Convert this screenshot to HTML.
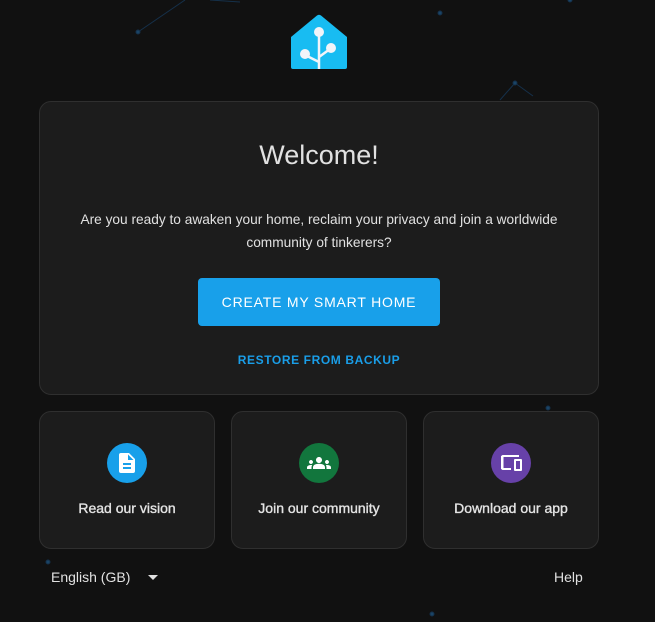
<!DOCTYPE html>
<html><head><style>
body{margin:0;width:655px;height:622px;background:#111111;font-family:"Liberation Sans",sans-serif;position:relative;overflow:hidden;color:#e1e1e1}
.card{position:absolute;background:#1c1c1c;border:1px solid #2f2f2f;border-radius:12px;box-sizing:border-box}
.t{position:absolute;width:100%;text-align:center}
.ic{position:absolute;left:50%;top:31px;width:40px;height:40px;margin-left:-20px;border-radius:50%}
.ic svg{position:absolute;left:8px;top:8px}
.lbl{top:88px;font-size:14px;color:#e4e4e4;-webkit-text-stroke:0.35px #e4e4e4}
</style></head><body>
<svg width="655" height="622" style="position:absolute;left:0;top:0">
<g stroke="#15304a" stroke-width="1" fill="#1a4466">
<line x1="138" y1="32" x2="185" y2="0"/><circle cx="138" cy="32" r="2"/>
<line x1="210" y1="0" x2="240" y2="2"/>
<circle cx="440" cy="13" r="2"/><circle cx="570" cy="0" r="2"/>
<line x1="500" y1="100" x2="515" y2="83"/><line x1="515" y1="83" x2="533" y2="96"/><circle cx="515" cy="83" r="2"/>
<circle cx="548" cy="408" r="2"/><circle cx="48" cy="562" r="2"/><circle cx="432" cy="614" r="2"/>
</g></svg>
<svg width="58" height="56" viewBox="0 0 58 56" style="position:absolute;left:290px;top:14px">
<path d="M1 23 L27 1.5 Q29 0 31 1.5 L57 23 V53 Q57 55 55 55 H3 Q1 55 1 53 Z" fill="#18bcf2"/>
<g stroke="#f2f4f9" stroke-width="2.5" fill="none"><path d="M29 18 V55 M29 48 L15 41 M29 43 L40 35"/></g>
<g fill="#f2f4f9"><circle cx="29" cy="18" r="5"/><circle cx="15" cy="40" r="5"/><circle cx="41" cy="34" r="5"/></g>
</svg>
<div class="card" style="left:39px;top:101px;width:560px;height:294px">
<div class="t" style="top:38px;font-size:27px;color:#e1e1e1">Welcome!</div>
<div class="t" style="top:106px;font-size:13.7px;line-height:23px;color:#e1e1e1">Are you ready to awaken your home, reclaim your privacy and join a worldwide<br>community of tinkerers?</div>
<div style="position:absolute;left:158px;top:176px;width:242px;height:48px;background:#18a0ea;border-radius:4px;color:#fff;font-size:14px;letter-spacing:0.8px;text-align:center;line-height:48px">CREATE MY SMART HOME</div>
<div class="t" style="top:251px;font-size:12px;letter-spacing:0.6px;color:#1a9ee8;font-weight:bold">RESTORE FROM BACKUP</div>
</div>
<div class="card" style="left:39px;top:411px;width:176px;height:138px">
<div class="ic" style="background:#18a0ea"><svg width="24" height="24" viewBox="0 0 24 24"><path fill="#fff" d="M14 2H6a2 2 0 0 0-2 2v16a2 2 0 0 0 2 2h12a2 2 0 0 0 2-2V8l-6-6zM16 18H8v-2h8v2zm0-4H8v-2h8v2zm-3-5V3.5L18.5 9H13z"/></svg></div>
<div class="t lbl">Read our vision</div></div>
<div class="card" style="left:231px;top:411px;width:176px;height:138px">
<div class="ic" style="background:#12763d"><svg width="24" height="24" viewBox="0 0 24 24"><path fill="#fff" d="M12 12.75c1.630 0 3.07.39 4.240.9 1.08.48 1.76 1.56 1.76 2.73V18H6v-1.61c0-1.18.68-2.26 1.76-2.73 1.17-.52 2.61-.91 4.24-.91zM4 13c1.1 0 2-.9 2-2s-.9-2-2-2-2 .9-2 2 .9 2 2 2zm1.13 1.1C4.76 14.04 4.39 14 4 14c-.99 0-1.930.21-2.780.58A2.01 2.01 0 0 0 0 16.43V18h4.5v-1.61c0-.83.23-1.61.63-2.290zM20 13c1.1 0 2-.9 2-2s-.9-2-2-2-2 .9-2 2 .9 2 2 2zm4 3.43c0-.81-.48-1.53-1.22-1.85A6.950 6.950 0 0 0 20 14c-.39 0-.76.04-1.13.1.4.68.63 1.46.63 2.29V18H24v-1.57zM12 6c1.66 0 3 1.34 3 3s-1.34 3-3 3-3-1.34-3-3 1.34-3 3-3z"/></svg></div>
<div class="t lbl">Join our community</div></div>
<div class="card" style="left:423px;top:411px;width:176px;height:138px">
<div class="ic" style="background:#6741a8"><svg width="24" height="24" viewBox="0 0 24 24"><path fill="#fff" d="M4 6h16V4H4c-1.1 0-2 .9-2 2v11c0 1.1.9 2 2 2h8v-2H4V6zm0 0M22 8h-6c-.55 0-1 .45-1 1v10c0 .55.45 1 1 1h6c.55 0 1-.45 1-1V9c0-.55-.45-1-1-1zm-1 10h-4v-8h4v8z"/><rect x="2" y="5" width="2.5" height="13" fill="#fff"/></svg></div>
<div class="t lbl">Download our app</div></div>
<div style="position:absolute;left:51px;top:569px;font-size:14px">English (GB)</div>
<div style="position:absolute;left:148px;top:575px;width:0;height:0;border-left:5px solid transparent;border-right:5px solid transparent;border-top:5px solid #e1e1e1"></div>
<div style="position:absolute;left:554px;top:569px;font-size:14px">Help</div>
</body></html>
